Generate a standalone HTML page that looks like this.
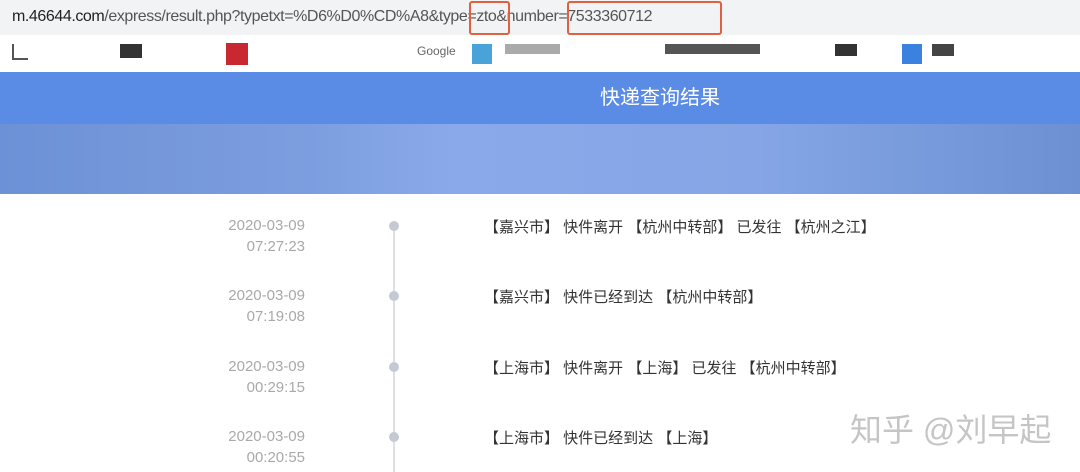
<!DOCTYPE html>
<html><head><meta charset="utf-8"><style>
body{margin:0;width:1080px;height:472px;overflow:hidden;background:#fff;font-family:"Liberation Sans","Noto Sans CJK SC",sans-serif;position:relative}
.abs{position:absolute}
.url{top:0;left:0;width:1080px;height:35px;background:#f1f3f4}
.bm{top:35px;left:0;width:1080px;height:37px;background:#fff;border-bottom:1px solid #dfe3ea}
.hdr{top:72px;left:0;width:1080px;height:52px;background:#5b8ce5;color:#fff;font-size:20px;text-align:center;line-height:52px;text-indent:240px}
.ban{top:124px;left:0;width:1080px;height:70px;background:linear-gradient(90deg,#6d91d6 0%,#7d9fe0 30%,#8aa9ea 42%,#85a5e6 70%,#7599da 88%,#6d90d3 100%)}
.d{color:#a9a9a9;font-size:15px;text-align:right;width:200px;left:105px;line-height:21px}
.t{color:#333;font-size:15px;left:484px}
.dot{width:10px;height:10px;border-radius:50%;background:#c5c9d3;left:389px}
.box{border:2px solid #e0603f;border-radius:3px;height:30px;top:1px}
</style></head><body>
<div class="abs url"></div>
<div class="abs" style="top:8px;left:12px;font-size:16px;letter-spacing:-0.42px;color:#555;white-space:nowrap"><span style="color:#222">m.46644.com</span>/express/result.php?typetxt=%D6%D0%CD%A8&amp;type=zto&amp;number=7533360712</div>
<div class="abs box" style="left:469px;width:37px"></div>
<div class="abs box" style="left:567px;width:151px"></div>
<div class="abs bm"></div>
<div class="abs" style="top:44px;left:12px;width:14px;height:14px;border:2px solid #555;border-top:none;border-right:none"></div>
<div class="abs" style="top:44px;left:120px;width:22px;height:14px;background:#333"></div>
<div class="abs" style="top:43px;left:226px;width:22px;height:22px;background:#c8282f"></div>
<div class="abs" style="top:44px;left:417px;font-size:12px;color:#666">Google</div>
<div class="abs" style="top:44px;left:472px;width:20px;height:20px;background:#4aa3d8"></div>
<div class="abs" style="top:44px;left:505px;width:55px;height:10px;background:#aaa"></div>
<div class="abs" style="top:44px;left:665px;width:95px;height:10px;background:#555"></div>
<div class="abs" style="top:44px;left:835px;width:22px;height:12px;background:#333"></div>
<div class="abs" style="top:44px;left:902px;width:20px;height:20px;background:#3b82e0"></div>
<div class="abs" style="top:44px;left:932px;width:22px;height:12px;background:#444"></div>
<div class="abs hdr">快递查询结果</div>
<div class="abs ban"></div>
<div class="abs" style="left:393px;top:225px;width:2px;height:247px;background:#dcdfe6"></div>

<div class="abs d" style="top:215px">2020-03-09<br>07:27:23</div>
<div class="abs dot" style="top:221px"></div>
<div class="abs t" style="top:216px">【嘉兴市】 快件离开 【杭州中转部】 已发往 【杭州之江】</div>

<div class="abs d" style="top:285px">2020-03-09<br>07:19:08</div>
<div class="abs dot" style="top:291px"></div>
<div class="abs t" style="top:286px">【嘉兴市】 快件已经到达 【杭州中转部】</div>

<div class="abs d" style="top:356px">2020-03-09<br>00:29:15</div>
<div class="abs dot" style="top:362px"></div>
<div class="abs t" style="top:357px">【上海市】 快件离开 【上海】 已发往 【杭州中转部】</div>

<div class="abs d" style="top:426px">2020-03-09<br>00:20:55</div>
<div class="abs dot" style="top:432px"></div>
<div class="abs t" style="top:427px">【上海市】 快件已经到达 【上海】</div>

<div class="abs" style="top:405px;left:850px;font-size:32px;color:rgba(150,150,150,0.55);white-space:nowrap">知乎 @刘早起</div>
</body></html>
